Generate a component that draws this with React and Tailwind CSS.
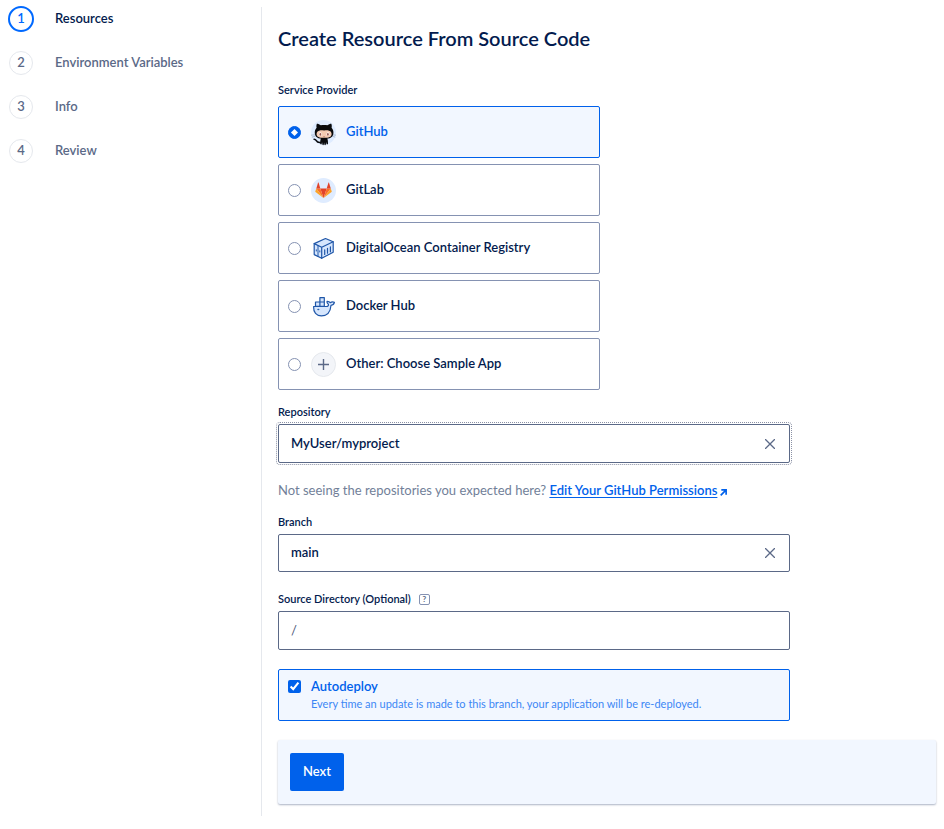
import React, { useState } from 'react';

const steps = ['Resources', 'Environment Variables', 'Info', 'Review'];

function GitHubIcon() {
  return (
    <svg viewBox="0 0 25 25" className="size-[25px] shrink-0 overflow-visible" aria-hidden="true">
      <circle cx="12.5" cy="12.5" r="12.5" fill="#dfecff" />
      <path d="M0 15.2 4 14.8M.8 17.2 4.3 16.2M21.500 14.800l3.500.4M21.300 16.200l3 1" stroke="#8fa0b8" strokeWidth=".6" />
      <g transform="translate(.6 0)">
        <path d="M5.3 3.8c1.3 0 2.8.7 3.9 1.5 2-.5 4.6-.5 6.6 0 1.1-.8 2.6-1.5 3.9-1.5.6 1.4.6 2.9.3 3.9 1.4 1.5 2 3.3 1.8 5.6-.3 3.9-3 5.7-9.3 5.7s-9-1.8-9.3-5.7c-.2-2.3.4-4.1 1.8-5.6-.3-1-.3-2.5.3-3.9Z" fill="#0a0a0c" />
        <path d="M9.800 17.500h5.400c1 1.700 1.300 3.800 1.200 6.100 0 .9-1.200 1.300-1.500.5l-.3-2-.4 2.500c-.2.9-1.200.9-1.400 0l-.3-2.200-.3 2.200c-.2.9-1.200.9-1.400 0l-.4-2.500-.3 2c-.3.8-1.500.4-1.500-.5-.1-2.300.2-4.400 1.200-6.100Z" fill="#0a0a0c" />
        <path d="M9 22.500c-3 .5-3.700-.7-4.500-2.100-.4-.7-1-1.100-2-1.200" fill="none" stroke="#0a0a0c" strokeWidth="1.500" strokeLinecap="round" />
        <path d="M8.200 10.400c1.400-.3 2.800 0 4.300 0s2.900-.3 4.300 0c2.100.4 3.400 1.800 3.200 4.100-.3 2.500-2.700 3.300-7.500 3.300s-7.200-.8-7.500-3.300c-.2-2.300 1.100-3.700 3.200-4.100Z" fill="#f5cbb2" />
        <ellipse cx="8.600" cy="14.200" rx="1.400" ry="1.900" fill="#fff" />
        <ellipse cx="16.400" cy="14.200" rx="1.400" ry="1.900" fill="#fff" />
        <ellipse cx="8.700" cy="14.400" rx=".9" ry="1.300" fill="#9b5b52" />
        <ellipse cx="16.300" cy="14.400" rx=".9" ry="1.300" fill="#9b5b52" />
        <path d="M11.600 16.600q.9.500 1.800 0" fill="none" stroke="#a4665b" strokeWidth=".6" />
      </g>
    </svg>
  );
}

function GitLabIcon() {
  return (
    <svg viewBox="0 0 25 25" className="size-[25px] shrink-0" aria-hidden="true">
      <circle cx="12.5" cy="12.5" r="12.5" fill="#dfecff" />
      <g transform="translate(.9 0) scale(.93)">
        <path d="M12.5 21.5 15.9 11.2H9.1Z" fill="#e24329" />
        <path d="M12.5 21.5 9.1 11.2H4.7Z" fill="#fc6d26" />
        <path d="M4.7 11.2 3.7 14.2c-.1.3 0 .6.2.8l8.6 6.5Z" fill="#fca326" />
        <path d="M4.7 11.2h4.4L7.2 5.1c-.1-.3-.5-.3-.6 0Z" fill="#e24329" />
        <path d="M12.5 21.5 15.9 11.2h4.4Z" fill="#fc6d26" />
        <path d="m20.3 11.2 1 3c.1.3 0 .6-.2.8l-8.600 6.500Z" fill="#fca326" />
        <path d="M20.3 11.2h-4.400l1.900-6.100c.1-.3.500-.3.600 0Z" fill="#e24329" />
      </g>
    </svg>
  );
}

function ContainerIcon() {
  return (
    <svg viewBox="0 0 25 25" className="size-[25px] shrink-0" fill="none" stroke="#1f56a8" strokeWidth="1.2" strokeLinejoin="round" strokeLinecap="round" aria-hidden="true">
      <path d="M3.2 7.6 14.5 2.5l7.700 3.300v10.400L10.700 22.300l-7.500-3.700Z" fill="#d6e6fd" />
      <path d="m3.2 7.6 7.500 3.700 11.500-5.500M10.700 11.300v11" />
      <path d="M7 9.8v10.400M5.300 13.800v1.200M8.800 14.800V16" strokeWidth="1" />
      <path d="M13.7 13.8v4.700M16.500 12.300v4.900M19.400 10.800v5" />
    </svg>
  );
}

function DockerIcon() {
  return (
    <svg viewBox="0 0 25 25" className="size-[25px] shrink-0" fill="#d6e6fd" stroke="#1f56a8" strokeWidth="1.2" strokeLinejoin="round" strokeLinecap="round" aria-hidden="true">
      <path d="M4.500 8h4.400v4.400H4.500zM8.900 8h4.400v4.400H8.900zM8.900 3.600h4.400V8H8.900z" />
      <path d="M2.600 12.500h12.800c1.600 0 2.300-1 2-2.200-1-.8-1.700-1.900-1.400-3 1.300-.1 2.600.5 3.200 1.400 1.100-.8 2.700-1 4.200-.4-.4 1.700-1.600 2.800-3.400 3-.5 6.600-4 10.600-9.600 10.600-5 0-8.100-3.600-7.800-9.400Z" />
      <circle cx="7.200" cy="15.500" r=".6" fill="#1f56a8" strokeWidth=".5" />
    </svg>
  );
}

function PlusIcon() {
  return (
    <svg viewBox="0 0 25 25" className="size-[25px] shrink-0" aria-hidden="true">
      <circle cx="12.5" cy="12.5" r="12" fill="#f3f5f9" stroke="#e5e8ed" />
      <path d="M12.5 7v11M7 12.5h11" stroke="#5b6987" strokeWidth="1.4" />
    </svg>
  );
}

const providers = [
  { id: 'github', name: 'GitHub', Icon: GitHubIcon },
  { id: 'gitlab', name: 'GitLab', Icon: GitLabIcon },
  { id: 'docr', name: 'DigitalOcean Container Registry', Icon: ContainerIcon },
  { id: 'dockerhub', name: 'Docker Hub', Icon: DockerIcon },
  { id: 'other', name: 'Other: Choose Sample App', Icon: PlusIcon },
];

function ClearableInput({ id, initial, highlighted }) {
  const [value, setValue] = useState(initial);
  return (
    <div
      className={
        'flex items-center rounded-xs border border-[#5b6987] pr-2.5 pl-3 ' +
        (highlighted ? 'h-[39px] outline-1 outline-offset-1 outline-dotted outline-[#8b91a5]' : 'h-[38px]')
      }
    >
      <input
        id={id}
        type="text"
        value={value}
        onChange={(e) => setValue(e.target.value)}
        className="h-full min-w-0 flex-1 bg-transparent pb-0.5 text-[13px] font-semibold outline-none"
      />
      <button type="button" aria-label="Clear" onClick={() => setValue('')} className="p-1">
        <svg viewBox="0 0 10 10" className="size-2.5" stroke="#5b6987" strokeWidth="1.3" aria-hidden="true">
          <path d="m0 0 10 10M10 0 0 10" />
        </svg>
      </button>
    </div>
  );
}

export default function App() {
  const [provider, setProvider] = useState('github');
  const [autodeploy, setAutodeploy] = useState(true);

  return (
    <div className="flex bg-white px-2 pt-[7px] pb-3 font-[Lato,'Liberation_Sans',sans-serif] text-[13px] leading-4 text-[#031b4e]">
      <nav className="w-[254px] shrink-0 border-r border-[#e5e8ed]">
        <ol className="flex flex-col gap-5">
          {steps.map((step, i) => (
            <li key={step} className="flex h-6 items-center gap-[21px] font-semibold">
              <span className="flex w-[26px] justify-center">
                <span
                  className={
                    'flex items-center justify-center rounded-full pb-0.5 ' +
                    (i === 0 ? 'size-[26px] border-2 border-[#0069ff] text-[#0069ff]' : 'size-6 border border-[#e5e8ed] text-[#5b6987]')
                  }
                >
                  {i + 1}
                </span>
              </span>
              <span className={i === 0 ? 'pb-0.5 text-[#031b4e]' : 'pb-0.5 text-[#5b6987]'}>{step}</span>
            </li>
          ))}
        </ol>
      </nav>

      <main className="min-w-0 flex-1 pt-[19px] pb-3 pl-4">
        <h1 className="text-xl leading-6 font-semibold">Create Resource From Source Code</h1>

        <form onSubmit={(e) => e.preventDefault()} className="mt-8">
          <fieldset>
            <legend className="text-[11px] leading-4 font-semibold">Service Provider</legend>
            <div className="mt-2 flex max-w-[322px] flex-col gap-1.5">
              {providers.map(({ id, name, Icon }) => (
                <label
                  key={id}
                  className={
                    'flex h-[52px] items-center gap-2.5 rounded-xs border px-[9px] font-semibold ' +
                    (provider === id ? 'border-[#0061eb] bg-[#f2f7ff] text-[#0061eb]' : 'border-[#8592b2]')
                  }
                >
                  <input
                    type="radio"
                    name="provider"
                    checked={provider === id}
                    onChange={() => setProvider(id)}
                    className="grid size-[13px] shrink-0 appearance-none place-items-center rounded-full border border-[#8592b2] bg-white before:size-[5px] before:rotate-45 before:bg-white checked:border-[#0061eb] checked:bg-[#0061eb]"
                  />
                  <Icon />
                  <span className="pb-0.5">{name}</span>
                </label>
              ))}
            </div>
          </fieldset>

          <div className="mt-3.5 max-w-[512px]">
            <label htmlFor="repository" className="mb-1 block text-[11px] leading-4 font-semibold">
              Repository
            </label>
            <ClearableInput id="repository" initial="MyUser/myproject" highlighted />
            <p className="mt-[19px] text-[#727f99]">
              Not seeing the repositories you expected here?{' '}
              <a href="#permissions" className="font-semibold text-[#0061eb]">
                <span className="underline underline-offset-2">Edit Your GitHub Permissions</span>
                <svg viewBox="0 0 8 8" className="ml-[3px] inline size-[7px] align-[-1px]" fill="none" stroke="currentColor" strokeWidth="1.9" aria-hidden="true">
                  <path d="M1.5 1H7v5.500M7 1 .8 7.200" />
                </svg>
              </a>
            </p>

            <label htmlFor="branch" className="mt-4 mb-1 block text-[11px] leading-4 font-semibold">
              Branch
            </label>
            <ClearableInput id="branch" initial="main" />

            <div className="mt-[19px] mb-1 flex items-center gap-2">
              <label htmlFor="source" className="text-[11px] leading-4 font-semibold">
                Source Directory (Optional)
              </label>
              <button
                type="button"
                aria-label="Help"
                className="flex size-[11px] items-center justify-center rounded-xs border border-[#8592b2] text-[8px] leading-none font-bold text-[#5b6987]"
              >
                ?
              </button>
            </div>
            <input
              id="source"
              type="text"
              defaultValue="/"
              className="h-[39px] w-full rounded-xs border border-[#5b6987] px-3 pb-0.5 text-[13px] text-[#4a5878] outline-none"
            />

            <label className="mt-[19px] flex h-[52px] items-start gap-2.5 rounded-xs border border-[#0061eb] bg-[#f2f7ff] px-[9px] pt-2.5 text-[#0061eb]">
              <input
                type="checkbox"
                checked={autodeploy}
                onChange={() => setAutodeploy(!autodeploy)}
                className="size-[13px] shrink-0 accent-[#0061eb]"
              />
              <span className="-mt-0.5 flex flex-col">
                <span className="font-semibold">Autodeploy</span>
                <span className="mt-0.5 text-[11px] leading-4 text-[#3d87f5]">
                  Every time an update is made to this branch, your application will be re-deployed.
                </span>
              </span>
            </label>
          </div>

          <div className="mt-[19px] rounded-xs bg-[#f2f7ff] px-3 py-[13px] shadow-[0_1px_2px_#031b4e55]">
            <button type="submit" className="h-[38px] rounded-xs bg-[#0061eb] px-[13px] pb-0.5 font-semibold text-white">
              Next
            </button>
          </div>
        </form>
      </main>
    </div>
  );
}
